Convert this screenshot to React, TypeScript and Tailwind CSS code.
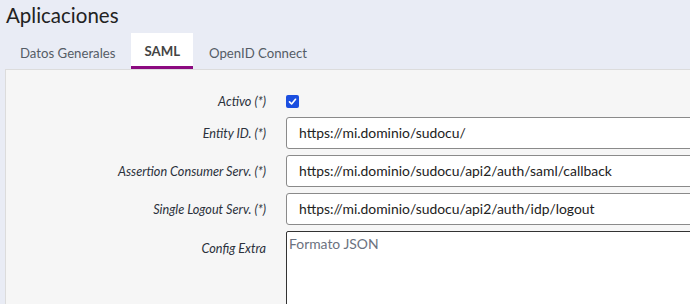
import React from "react";

const font = { fontFamily: "Lato, 'Open Sans', sans-serif" };

function Row({ label, children, top }: { label: string; children: React.ReactNode; top?: boolean }) {
  return (
    <div className={`flex ${top ? "items-start" : "items-center"} gap-[20px]`}>
      <div className={`w-[260px] shrink-0 text-right italic text-[12.7px] text-[#2b313b] ${top ? "pt-[8px]" : ""}`}>{label}</div>
      <div className="flex-1">{children}</div>
    </div>
  );
}

export default function App() {
  return (
    <div className="w-[690px] h-[304px] overflow-hidden bg-[#e9ecf5]" style={font}>
      <div className="pl-[6px] pt-[1px] text-[20.5px] leading-[28px] text-[#222]">Aplicaciones</div>
      <div className="flex pl-[4px] mt-[4px] h-[36px] items-stretch">
        <div className="px-[16px] flex items-center text-[13.2px] text-[#555c66] pt-[5px]">Datos Generales</div>
        <div className="px-[13px] flex items-center text-[13.2px] font-bold text-[#444] bg-white border-b-[3px] border-[#8c0a80] pt-[5px]">SAML</div>
        <div className="px-[16px] flex items-center text-[13.2px] text-[#555c66] pt-[5px]">OpenID Connect</div>
      </div>
      <div className="ml-[5px] w-[900px] h-[300px] bg-[#f6f6f6] border-t border-l border-[#dcdcdc] pt-[22px] flex flex-col gap-[6px]">
        <Row label="Activo (*)">
          <div className="h-[16px] flex items-center">
            <span className="w-[13px] h-[13px] rounded-[2px] bg-[#1b4fe0] flex items-center justify-center">
              <svg width="9" height="9" viewBox="0 0 12 12"><path d="M2 6.5l2.8 2.8L10 3" stroke="white" strokeWidth="2.2" fill="none" strokeLinecap="round" strokeLinejoin="round" /></svg>
            </span>
          </div>
        </Row>
        <Row label="Entity ID. (*)">
          <div className="h-[32px] border border-[#8a8a8a] rounded-[3px] bg-white flex items-center pl-[12px] text-[13.9px] text-[#222]">https://mi.dominio/sudocu/</div>
        </Row>
        <Row label="Assertion Consumer Serv. (*)">
          <div className="h-[32px] border border-[#8a8a8a] rounded-[3px] bg-white flex items-center pl-[12px] text-[13.9px] text-[#222]">https://mi.dominio/sudocu/api2/auth/saml/callback</div>
        </Row>
        <Row label="Single Logout Serv. (*)">
          <div className="h-[32px] border border-[#8a8a8a] rounded-[3px] bg-white flex items-center pl-[12px] text-[13.9px] text-[#222]">https://mi.dominio/sudocu/api2/auth/idp/logout</div>
        </Row>
        <Row label="Config Extra" top>
          <div className="h-[120px] border border-[#333] rounded-[2px] bg-white pl-[2px] pt-[2px] text-[13.9px] text-[#6b7280] leading-[20px]">Formato JSON</div>
        </Row>
      </div>
    </div>
  );
}
